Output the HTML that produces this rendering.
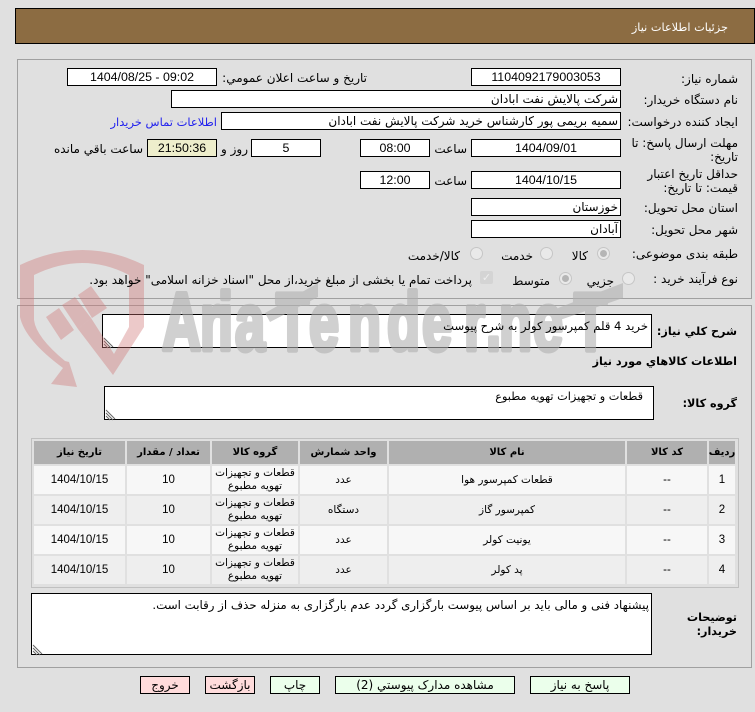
<!DOCTYPE html>
<html lang="fa"><head><meta charset="utf-8"><title>جزئیات اطلاعات نیاز</title>
<style>
html,body{margin:0;padding:0;background:#e0e0e0;}
body{width:755px;height:712px;position:relative;overflow:hidden;font-family:"DejaVu Sans","Liberation Sans",sans-serif;font-size:12px;color:#000;}
.b,.l,.r,.t{position:absolute;box-sizing:border-box;}
.b{background:#fff;border:1px solid #000;display:flex;align-items:center;justify-content:center;height:18px;font-family:"Liberation Sans","DejaVu Sans",sans-serif;font-size:12.4px;line-height:16px;white-space:nowrap;overflow:hidden;}
.a{justify-content:flex-start;direction:rtl;padding:0 2px;font-family:"DejaVu Sans",sans-serif;font-size:12px;}
.l{direction:rtl;text-align:right;white-space:nowrap;line-height:14px;z-index:3;}
.bold{font-weight:bold;font-size:11.2px;}
.r{width:13px;height:13px;border-radius:50%;background:#e9e9e9;border:1px solid #c6c6c6;z-index:3;}
.r.on:after{content:"";position:absolute;left:2px;top:2px;width:7px;height:7px;border-radius:50%;background:#b5b5b5;}
.pn{position:absolute;box-sizing:border-box;border:1px solid #a0a0a0;}
.c{position:absolute;display:flex;align-items:center;justify-content:center;text-align:center;direction:rtl;font-size:10.5px;line-height:13px;box-sizing:border-box;}
.th{background:#b0b0b0;font-weight:bold;top:441px;height:23px;font-size:10px;}
.o{background:#f7f7f7}.e{background:#eeeeee}
.num{font-family:"Liberation Sans",sans-serif;font-size:11.5px;}
.btn{position:absolute;top:676px;height:18px;box-sizing:border-box;border:1px solid #000;display:flex;align-items:center;justify-content:center;direction:rtl;font-size:12px;white-space:nowrap;}
.g{background:#ebffeb}.p{background:#ffdcdc}
svg.wm{position:absolute;left:0;top:0;pointer-events:none;z-index:2;}
</style></head><body>

<div class="b" style="left:15px;top:8px;width:740px;height:36px;background:#8c6c42;"></div>
<div class="l" style="right:27px;top:21px;color:#fff;font-size:11.3px;">جزئيات اطلاعات نياز</div>

<div class="pn" style="left:17px;top:59px;width:735px;height:240px;"></div>
<div class="pn" style="left:17px;top:305px;width:735px;height:363px;"></div>

<div class="l" style="right:17px;top:72px;">شماره نياز:</div>
<div class="b" style="left:471px;top:68px;width:150px;">1104092179003053</div>
<div class="l" style="right:388px;top:71px;">تاريخ و ساعت اعلان عمومي:</div>
<div class="b" style="left:67px;top:68px;width:150px;">1404/08/25 - 09:02</div>

<div class="l" style="right:17px;top:93px;">نام دستگاه خريدار:</div>
<div class="b a" style="left:171px;top:90px;width:450px;">شرکت پالايش نفت ابادان</div>

<div class="l" style="right:17px;top:115px;">ايجاد کننده درخواست:</div>
<div class="b a" style="left:221px;top:112px;width:400px;">سميه بريمی پور کارشناس خريد شرکت پالايش نفت ابادان</div>
<div class="l" style="right:538px;top:115px;color:#2222ee;font-size:11.5px;">اطلاعات تماس خريدار</div>

<div class="l" style="right:17px;top:136px;">مهلت ارسال پاسخ: تا</div>
<div class="l" style="right:17px;top:150px;">تاريخ:</div>
<div class="b" style="left:471px;top:139px;width:150px;">1404/09/01</div>
<div class="l" style="right:288px;top:142px;">ساعت</div>
<div class="b" style="left:360px;top:139px;width:70px;">08:00</div>
<div class="b" style="left:251px;top:139px;width:70px;">5</div>
<div class="l" style="right:507px;top:142px;">روز و</div>
<div class="b" style="left:147px;top:139px;width:70px;background:#eeeecc;">21:50:36</div>
<div class="l" style="right:612px;top:142px;">ساعت باقي مانده</div>

<div class="l" style="right:17px;top:167px;">حداقل تاريخ اعتبار</div>
<div class="l" style="right:17px;top:181px;">قيمت: تا تاريخ:</div>
<div class="b" style="left:471px;top:171px;width:150px;">1404/10/15</div>
<div class="l" style="right:288px;top:174px;">ساعت</div>
<div class="b" style="left:360px;top:171px;width:70px;">12:00</div>

<div class="l" style="right:17px;top:201px;">استان محل تحويل:</div>
<div class="b a" style="left:471px;top:198px;width:150px;">خوزستان</div>
<div class="l" style="right:17px;top:223px;">شهر محل تحويل:</div>
<div class="b a" style="left:471px;top:220px;width:150px;">آبادان</div>

<div class="l" style="right:17px;top:247px;">طبقه بندی موضوعی:</div>
<div class="r on" style="left:597px;top:247px;"></div>
<div class="l" style="right:167px;top:249px;">کالا</div>
<div class="r" style="left:540px;top:247px;"></div>
<div class="l" style="right:222px;top:249px;">خدمت</div>
<div class="r" style="left:470px;top:247px;"></div>
<div class="l" style="right:295px;top:249px;">کالا/خدمت</div>

<div class="l" style="right:17px;top:272px;">نوع فرآيند خريد :</div>
<div class="r" style="left:622px;top:272px;"></div>
<div class="l" style="right:141px;top:274px;">جزيي</div>
<div class="r on" style="left:559px;top:272px;"></div>
<div class="l" style="right:205px;top:274px;">متوسط</div>
<div class="t" style="left:480px;top:271px;width:13px;height:13px;background:#d4d4d4;border-radius:2px;color:#eee;font:bold 11px/13px 'DejaVu Sans',sans-serif;text-align:center;z-index:3;">✓</div>
<div class="l" style="right:283px;top:273px;">پرداخت تمام يا بخشی از مبلغ خريد،از محل "اسناد خزانه اسلامی" خواهد بود.</div>

<div class="l bold" style="right:18px;top:325px;">شرح کلي نياز:</div>
<div class="b" style="left:102px;top:314px;width:550px;height:34px;"></div>
<div class="l" style="right:107px;top:319px;font-size:11.6px;">خريد 4 قلم کمپرسور کولر به شرح پيوست</div>

<div class="l bold" style="right:18px;top:355px;">اطلاعات کالاهاي مورد نياز</div>

<div class="l bold" style="right:18px;top:397px;">گروه کالا:</div>
<div class="b" style="left:104px;top:386px;width:550px;height:34px;"></div>
<div class="l" style="right:112px;top:390px;font-size:11.3px;">قطعات و تجهيزات تهويه مطبوع</div>

<div class="t" style="left:31px;top:438px;width:708px;height:150px;border:1px solid #c0c0c0;"></div>

<div class="c th" style="left:34px;width:91px;">تاريخ نياز</div>
<div class="c th" style="left:127px;width:83px;">تعداد / مقدار</div>
<div class="c th" style="left:212px;width:86px;">گروه کالا</div>
<div class="c th" style="left:300px;width:87px;">واحد شمارش</div>
<div class="c th" style="left:389px;width:236px;">نام کالا</div>
<div class="c th" style="left:627px;width:80px;">کد کالا</div>
<div class="c th" style="left:709px;width:26px;">رديف</div>

<div class="c num o" style="left:34px;top:466px;width:91px;height:28px;">1404/10/15</div>
<div class="c num o" style="left:127px;top:466px;width:83px;height:28px;">10</div>
<div class="c o" style="left:212px;top:466px;width:86px;height:28px;">قطعات و تجهيزات تهويه مطبوع</div>
<div class="c o" style="left:300px;top:466px;width:87px;height:28px;">عدد</div>
<div class="c o" style="left:389px;top:466px;width:236px;height:28px;">قطعات کمپرسور هوا</div>
<div class="c num o" style="left:627px;top:466px;width:80px;height:28px;">--</div>
<div class="c num o" style="left:709px;top:466px;width:26px;height:28px;">1</div>

<div class="c num e" style="left:34px;top:496px;width:91px;height:28px;">1404/10/15</div>
<div class="c num e" style="left:127px;top:496px;width:83px;height:28px;">10</div>
<div class="c e" style="left:212px;top:496px;width:86px;height:28px;">قطعات و تجهيزات تهويه مطبوع</div>
<div class="c e" style="left:300px;top:496px;width:87px;height:28px;">دستگاه</div>
<div class="c e" style="left:389px;top:496px;width:236px;height:28px;">کمپرسور گاز</div>
<div class="c num e" style="left:627px;top:496px;width:80px;height:28px;">--</div>
<div class="c num e" style="left:709px;top:496px;width:26px;height:28px;">2</div>

<div class="c num o" style="left:34px;top:526px;width:91px;height:28px;">1404/10/15</div>
<div class="c num o" style="left:127px;top:526px;width:83px;height:28px;">10</div>
<div class="c o" style="left:212px;top:526px;width:86px;height:28px;">قطعات و تجهيزات تهويه مطبوع</div>
<div class="c o" style="left:300px;top:526px;width:87px;height:28px;">عدد</div>
<div class="c o" style="left:389px;top:526px;width:236px;height:28px;">يونيت کولر</div>
<div class="c num o" style="left:627px;top:526px;width:80px;height:28px;">--</div>
<div class="c num o" style="left:709px;top:526px;width:26px;height:28px;">3</div>

<div class="c num e" style="left:34px;top:556px;width:91px;height:28px;">1404/10/15</div>
<div class="c num e" style="left:127px;top:556px;width:83px;height:28px;">10</div>
<div class="c e" style="left:212px;top:556px;width:86px;height:28px;">قطعات و تجهيزات تهويه مطبوع</div>
<div class="c e" style="left:300px;top:556px;width:87px;height:28px;">عدد</div>
<div class="c e" style="left:389px;top:556px;width:236px;height:28px;">پد کولر</div>
<div class="c num e" style="left:627px;top:556px;width:80px;height:28px;">--</div>
<div class="c num e" style="left:709px;top:556px;width:26px;height:28px;">4</div>

<div class="l bold" style="right:18px;top:611px;">توضيحات</div>
<div class="l bold" style="right:18px;top:625px;">خريدار:</div>
<div class="b" style="left:31px;top:593px;width:621px;height:62px;"></div>
<div class="l" style="right:106px;top:598px;font-size:11.8px;">پيشنهاد فنی و مالی بايد بر اساس پيوست بارگزاری گردد عدم بارگزاری به منزله حذف از رقابت است.</div>

<svg style="position:absolute;left:0;top:0" width="755" height="712">
<g stroke="#666" stroke-width="1" fill="none">
<path d="M104 341l7 7M104 344l4 4M104 338l9 9"/>
<path d="M106 413l7 7M106 416l4 4M106 410l9 9"/>
<path d="M33 648l7 7M33 651l4 4M33 645l9 9"/>
</g></svg>

<div class="btn p" style="left:140px;width:50px;">خروج</div>
<div class="btn p" style="left:205px;width:50px;">بازگشت</div>
<div class="btn g" style="left:270px;width:50px;">چاپ</div>
<div class="btn g" style="left:335px;width:180px;">مشاهده مدارک پيوستي (2)</div>
<div class="btn g" style="left:530px;width:100px;">پاسخ به نياز</div>

<svg class="wm" width="755" height="712" viewBox="0 0 755 712">
<path fill="rgba(206,116,116,.39)" d="M20 265Q83 235 144 265V327L113 375L78 329L91 318L114 354L129 327V275Q83 251 34 275V320Q36 337 65 361L69 362L77 387L51 384L63 368Q25 340 20 317Z"/>
<path fill="rgba(206,116,116,.39)" d="M46 317L59 308L74 330L61 340ZM62 305L75 297L91 318L78 329ZM78 295L91 286L107 308L92 318Z"/>
<g opacity=".6" fill="#b1b1b1">
<text transform="scale(.66,1)" x="245.5 303 330.3 356 418.2 468.2 527.3 586.4 639.4 703 736.4 756.1 807.6 869.7" y="350" font-family="Liberation Sans,sans-serif" font-weight="bold" font-size="82" stroke="#b1b1b1" stroke-width="5" stroke-linejoin="round">AriaTender.neT</text>
<path d="M265 313L318 283V297L270 322ZM558 308L623 283V298L560 320Z"/>
</g>
</svg>
</body></html>
